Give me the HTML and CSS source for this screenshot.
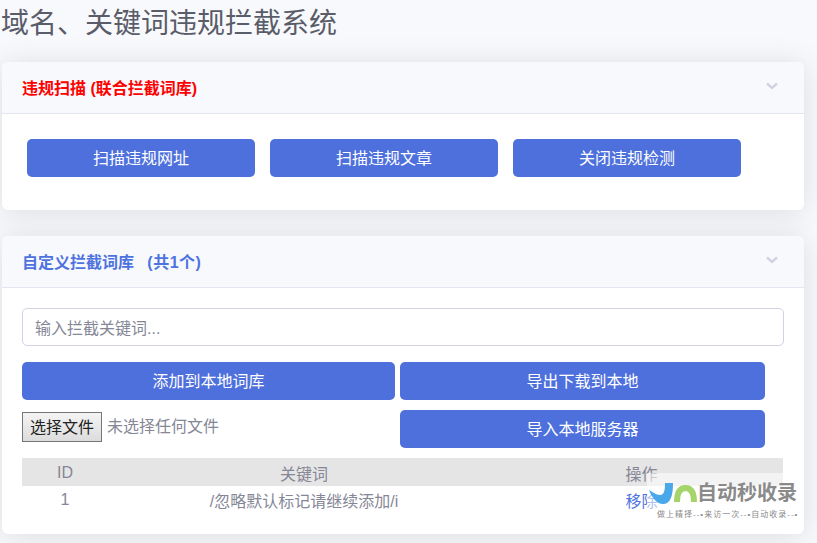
FILE: index.html
```html
<!DOCTYPE html>
<html lang="zh-CN">
<head>
<meta charset="utf-8">
<title>域名、关键词违规拦截系统</title>
<link rel="stylesheet" href="styles.css">
</head>
<body>
<h1 class="title">域名、关键词违规拦截系统</h1>

<section class="card card-scan">
  <header class="card-head">
    <h2 class="card-title danger">违规扫描 (联合拦截词库)</h2>
    <svg class="chevron" viewBox="0 0 12 8" width="12" height="8"><path d="M1 1.500 6 6l5-4.500" fill="none" stroke="#d1d3e2" stroke-width="2.400"/></svg>
  </header>
  <div class="card-body scan-body">
    <button class="btn scan-btn">扫描违规网址</button>
    <button class="btn scan-btn">扫描违规文章</button>
    <button class="btn scan-btn">关闭违规检测</button>
  </div>
</section>

<section class="card card-lib">
  <header class="card-head">
    <h2 class="card-title primary">自定义拦截词库 &nbsp;&nbsp;<span class="count">(共1个)</span></h2>
    <svg class="chevron" viewBox="0 0 12 8" width="12" height="8"><path d="M1 1.500 6 6l5-4.500" fill="none" stroke="#d1d3e2" stroke-width="2.400"/></svg>
  </header>
  <div class="card-body lib-body">
    <input class="keyword" type="text" placeholder="输入拦截关键词...">
    <div class="actions">
      <button class="btn">添加到本地词库</button>
      <button class="btn">导出下载到本地</button>
      <div class="file">
        <button class="file-btn">选择文件</button>
        <span class="file-name">未选择任何文件</span>
      </div>
      <button class="btn import">导入本地服务器</button>
    </div>
    <table class="words">
      <thead>
        <tr><th class="col-id">ID</th><th class="col-word">关键词</th><th>操作</th></tr>
      </thead>
      <tbody>
        <tr><td>1</td><td>/忽略默认标记请继续添加/i</td><td><a class="remove" href="#">移除</a></td></tr>
      </tbody>
    </table>
  </div>
</section>

<aside class="stamp">
  <div class="stamp-main">
    <svg class="stamp-logo" viewBox="0 0 50 24" width="50" height="24">
      <path d="M2 9C5 17 10 23 16 23 22 23 26 18 26 2H18C18 10 17 14 13 14 9 14 6 11 2 9Z" fill="#4aa8ea"/>
      <path d="M30 21C30 10 34 7 38.500 7 43 7 47 10 47 21" fill="none" stroke="#a4d46a" stroke-width="6"/>
    </svg>
    <span class="stamp-name">自动秒收录</span>
  </div>
  <div class="stamp-sub">做上精择--•来访一次--•自动收录--•</div>
</aside>
</body>
</html>
```

FILE: styles.css
```css
* { box-sizing: border-box; }

html, body { margin: 0; padding: 0; height: 543px; overflow: hidden; }

body {
  position: relative;
  background: #f8f9fc;
  color: #858796;
  font-family: "Liberation Sans", "Noto Sans CJK SC", sans-serif;
  font-size: 16px;
  padding: 0 13px 0 2px;
}

.title {
  margin: 0 0 0 -1px;
  height: 62px;
  padding-top: 4px;
  font-size: 28px;
  line-height: 40px;
  font-weight: 400;
  color: #5a5c69;
}

.card {
  background: #fff;
  border-radius: 6px;
  box-shadow: 0 2px 28px rgba(58, 59, 69, .15);
  overflow: hidden;
}

.card-scan { height: 148px; margin-bottom: 26px; }
.card-lib { height: 298px; }

.card-head {
  display: flex;
  align-items: center;
  justify-content: space-between;
  height: 52px;
  padding: 0 26px 0 20px;
  background: #f8f9fc;
  border-bottom: 1px solid #e3e6f0;
}

.card-title { margin: 0; padding-top: 3px; font-size: 16px; font-weight: 700; line-height: 24px; }
.danger { color: #f00; }
.primary { color: #4e73df; }
.count { letter-spacing: .5px; }
.chevron { display: block; margin-top: -3px; }

.scan-body { display: flex; gap: 15px; padding: 25px 0 0 25px; }

.btn {
  height: 38px;
  border: 0;
  border-radius: 5px;
  background: #4e70dc;
  color: #fff;
  font: inherit;
  line-height: 36px;
  padding: 2px 0 0;
}

.scan-btn { width: 228px; }

.lib-body { padding: 20px 20px 0; }

.keyword {
  display: block;
  width: 762px;
  height: 38px;
  padding: 3px 12px 0;
  border: 1px solid #d1d3e2;
  border-radius: 5px;
  font: inherit;
  color: #6e707e;
  background: #fff;
}

.keyword::placeholder { color: #858796; opacity: 1; }

.actions {
  display: grid;
  grid-template-columns: 373px 365px;
  column-gap: 5px;
  row-gap: 10px;
  margin-top: 16px;
}

.file { display: flex; align-items: flex-start; gap: 5px; padding-top: 2px; }

.file-btn {
  width: 80px;
  height: 30px;
  padding: 0 0 2px;
  border: 1px solid #767676;
  border-radius: 0;
  background: linear-gradient(#f4f4f4, #dcdcdc);
  color: #222;
  font: inherit;
}

.file-name { line-height: 30px; }

.words {
  width: 761px;
  margin-top: 10px;
  border-collapse: collapse;
  table-layout: fixed;
  text-align: center;
}

.words th { height: 28px; padding: 2px 0 0; font-weight: 400; background: #e5e5e5; }
.words td { height: 28px; padding: 0; }
.col-id { width: 86px; }
.col-word { width: 392px; }
.remove { color: #4e73df; text-decoration: none; }

.stamp {
  position: absolute;
  left: 647px;
  top: 473px;
  width: 153px;
  height: 50px;
  padding-top: 8px;
  background: rgba(255, 255, 255, .55);
}

.stamp-main { display: flex; align-items: center; height: 24px; }
.stamp-logo { display: block; flex: none; }

.stamp-name {
  font-size: 20px;
  font-weight: 700;
  line-height: 24px;
  color: #8a8a8a;
}

.stamp-sub {
  margin: 5px 0 0 10px;
  font-size: 8px;
  line-height: 10px;
  letter-spacing: 1px;
  white-space: nowrap;
  color: #8a8a8a;
}
```
